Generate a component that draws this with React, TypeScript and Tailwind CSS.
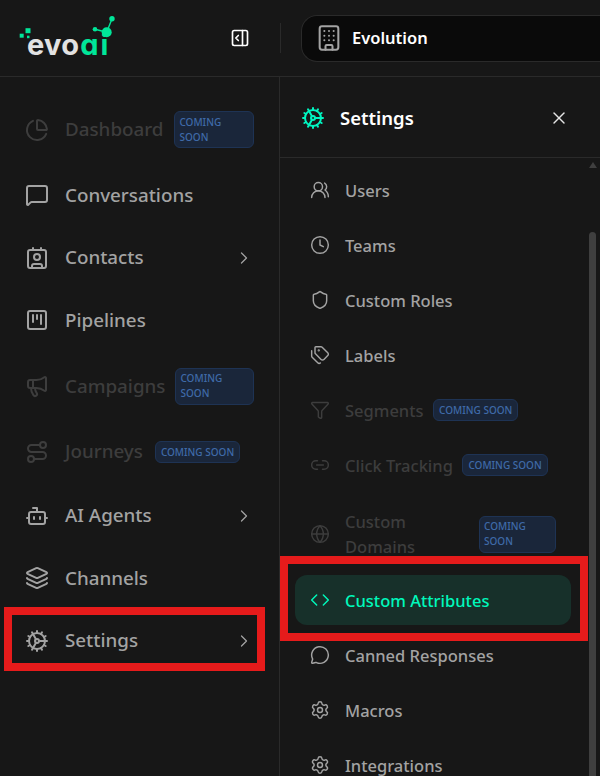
import {
  Bot,
  Building,
  ChartPie,
  ChevronRight,
  Clock,
  Code,
  Cog,
  Contact,
  Funnel,
  Globe,
  Layers,
  Link2,
  Megaphone,
  MessageCircle,
  MessageSquare,
  PanelRightOpen,
  Route,
  Settings,
  Shield,
  SquareKanban,
  Tags,
  UsersRound,
  X,
} from 'lucide-react';

function ComingSoon({ wrap }: { wrap?: boolean }) {
  return (
    <span
      className={`block rounded-md border border-[#1e3354] bg-[#1a263a] text-[10px] font-medium text-[#3f6aa8] uppercase ${
        wrap ? 'px-[4px] py-[2.500px] leading-[15px]' : 'px-[5px] py-[1px] leading-[18px] whitespace-nowrap'
      }`}
    >
      {wrap ? (
        <>
          Coming
          <br />
          Soon
        </>
      ) : (
        'Coming Soon'
      )}
    </span>
  );
}

const mainItems = [
  { label: 'Dashboard', icon: ChartPie, off: true, badge: 'wrap', h: 'h-[47px]', bw: 'w-[80px] ml-[11px]' },
  { label: 'Conversations', icon: MessageSquare, h: 'h-[41px]' },
  { label: 'Contacts', icon: Contact, arrow: true, h: 'h-[41px]' },
  { label: 'Pipelines', icon: SquareKanban, h: 'h-[41px]' },
  { label: 'Campaigns', icon: Megaphone, off: true, badge: 'wrap', h: 'h-[48px]', bw: 'w-[79px] ml-[10px]' },
  { label: 'Journeys', icon: Route, off: true, badge: 'line', h: 'h-[40px] mb-[2px]', bw: 'ml-[12px]' },
  { label: 'AI Agents', icon: Bot, arrow: true, h: 'h-[41px]' },
  { label: 'Channels', icon: Layers, h: 'h-[41px]' },
  { label: 'Settings', icon: Cog, arrow: true, h: 'h-[41px]' },
];

const settingsItems = [
  { label: 'Users', icon: UsersRound },
  { label: 'Teams', icon: Clock },
  { label: 'Custom Roles', icon: Shield },
  { label: 'Labels', icon: Tags },
  { label: 'Segments', icon: Funnel, off: true, badge: 'line' },
  { label: 'Click Tracking', icon: Link2, off: true, badge: 'line' },
  { label: 'Custom Domains', icon: Globe, off: true, badge: 'wrap', tall: true },
  { label: 'Custom Attributes', icon: Code, active: true },
  { label: 'Canned Responses', icon: MessageCircle },
  { label: 'Macros', icon: Settings },
  { label: 'Integrations', icon: Settings },
];

function Logo() {
  return (
    <div className="relative h-[44px] w-[110px]">
      <div className="absolute top-[12px] left-[17px] font-['Inter',sans-serif] text-[29px] leading-[34px] font-bold tracking-[0.3px] text-[#e2e2e2] [font-feature-settings:'cv11']">
        evo<span className="ml-[1px] tracking-[2px] text-[#00e699]">ai</span>
      </div>
      <svg viewBox="0 0 110 44" className="absolute inset-0 h-full w-full">
        <rect x="9.700" y="17.700" width="4" height="4" fill="#00e699" />
        <rect x="15.500" y="12.200" width="5" height="5" fill="#00e699" />
        <rect x="17" y="19.700" width="2.500" height="2.500" fill="#00e699" />
        <g stroke="#00e699" strokeWidth="1.400">
          <line x1="96.700" y1="16.300" x2="85" y2="13.300" />
          <line x1="96.700" y1="16.300" x2="102" y2="2.700" />
        </g>
        <circle cx="96.700" cy="16.300" r="5" fill="#00e699" />
        <circle cx="85" cy="13.300" r="2.300" fill="#00e699" />
        <circle cx="102" cy="2.700" r="2.700" fill="#00e699" />
      </svg>
    </div>
  );
}

export default function App() {
  return (
    <div className="relative flex h-[776px] w-[600px] flex-col overflow-hidden bg-[#171717] font-['Noto_Sans',sans-serif]">
      <header className="flex h-[77px] shrink-0 items-center border-b border-[#2a2a2a] bg-[#171717]">
        <div className="ml-[10px] w-[220px]">
          <Logo />
        </div>
        <PanelRightOpen size={20} strokeWidth={2} className="text-white" />
        <div className="ml-[30px] h-[30px] w-px bg-[#2a2a2a]" />
        <div className="ml-[20px] flex h-[47px] flex-1 items-center gap-[9px] rounded-l-2xl border-y border-l border-[#2a2a2a] bg-[#0a0a0a] pl-[13px]">
          <Building size={28} strokeWidth={1.750} className="text-[#a3a3a3]" />
          <span className="text-[16.500px] font-semibold text-white">Evolution</span>
        </div>
      </header>

      <div className="flex min-h-0 flex-1">
        <aside className="flex w-[280px] shrink-0 flex-col gap-[21.500px] border-r border-[#2a2a2a] pt-[29px] pr-[25px] pl-[25px]">
          {mainItems.map((item) => {
            const Icon = item.icon;
            return (
              <div key={item.label} className={`flex shrink-0 items-center ${item.h}`}>
                <Icon
                  size={24}
                  strokeWidth={2}
                  className={`shrink-0 ${item.off ? 'text-[#3d3d3d]' : 'text-[#a3a3a3]'}`}
                />
                <span
                  className={`ml-[16px] text-[18.800px] font-medium ${item.off ? 'text-[#3d3d3d]' : 'text-[#a3a3a3]'}`}
                >
                  {item.label}
                </span>
                {item.badge && (
                  <span className={`shrink-0 ${item.bw}`}>
                    <ComingSoon wrap={item.badge === 'wrap'} />
                  </span>
                )}
                {item.arrow && (
                  <ChevronRight size={20} strokeWidth={1.500} className="ml-auto text-[#a3a3a3]" />
                )}
              </div>
            );
          })}
        </aside>

        <section className="relative flex min-w-0 flex-1 flex-col">
          <div className="flex h-[81px] shrink-0 items-center border-b border-[#2a2a2a] pt-[1px] pr-[31px] pl-[21px]">
            <Cog size={24} strokeWidth={2} className="text-[#00f5c0]" />
            <span className="ml-[15px] flex-1 text-[18.500px] font-semibold text-white">Settings</span>
            <X size={20} strokeWidth={1.750} className="text-[#e5e5e5]" />
          </div>
          <div className="relative flex min-h-0 flex-1 flex-col gap-[5px] overflow-hidden pt-[7px] pr-[29px] pl-[15px]">
            {settingsItems.map((item) => {
              const Icon = item.icon;
              return (
                <div
                  key={item.label}
                  className={`flex shrink-0 items-center rounded-xl pl-[15px] ${item.tall ? 'mt-[2px] mb-[-1px] h-[74px]' : 'h-[50px]'} ${
                    item.active ? 'bg-[#17302a]' : ''
                  }`}
                >
                  <Icon
                    size={20}
                    strokeWidth={1.750}
                    className={`shrink-0 ${
                      item.active ? 'text-[#00f8bb]' : item.off ? 'text-[#3d3d3d]' : 'text-[#a3a3a3]'
                    }`}
                  />
                  <span
                    className={`ml-[15px] text-[16.500px] leading-[25px] font-medium ${
                      item.active ? 'text-[#00f8bb]' : item.off ? 'text-[#3d3d3d]' : 'text-[#a3a3a3]'
                    } ${item.tall ? 'w-[90px]' : ''}`}
                  >
                    {item.label}
                  </span>
                  {item.badge && (
                    <span className={item.tall ? 'ml-[44px] w-[77px] shrink-0' : 'ml-[9.500px] shrink-0'}>
                      <ComingSoon wrap={item.badge === 'wrap'} />
                    </span>
                  )}
                </div>
              );
            })}
            <div className="absolute top-[74px] right-[4px] bottom-0 w-[7px] rounded-t-[4px] bg-[#3f3f3f]" />
            <div className="absolute top-[4px] right-[3px] h-0 w-0 border-x-[4.500px] border-b-[6px] border-x-transparent border-b-[#3f3f3f]" />
          </div>
        </section>
      </div>

      <div className="pointer-events-none absolute top-[607px] left-[4px] h-[64px] w-[261px] border-[8px] border-[#e61b1b]" />
      <div className="pointer-events-none absolute top-[556px] left-[280px] h-[85px] w-[308px] border-[8px] border-[#e61b1b]" />
    </div>
  );
}
